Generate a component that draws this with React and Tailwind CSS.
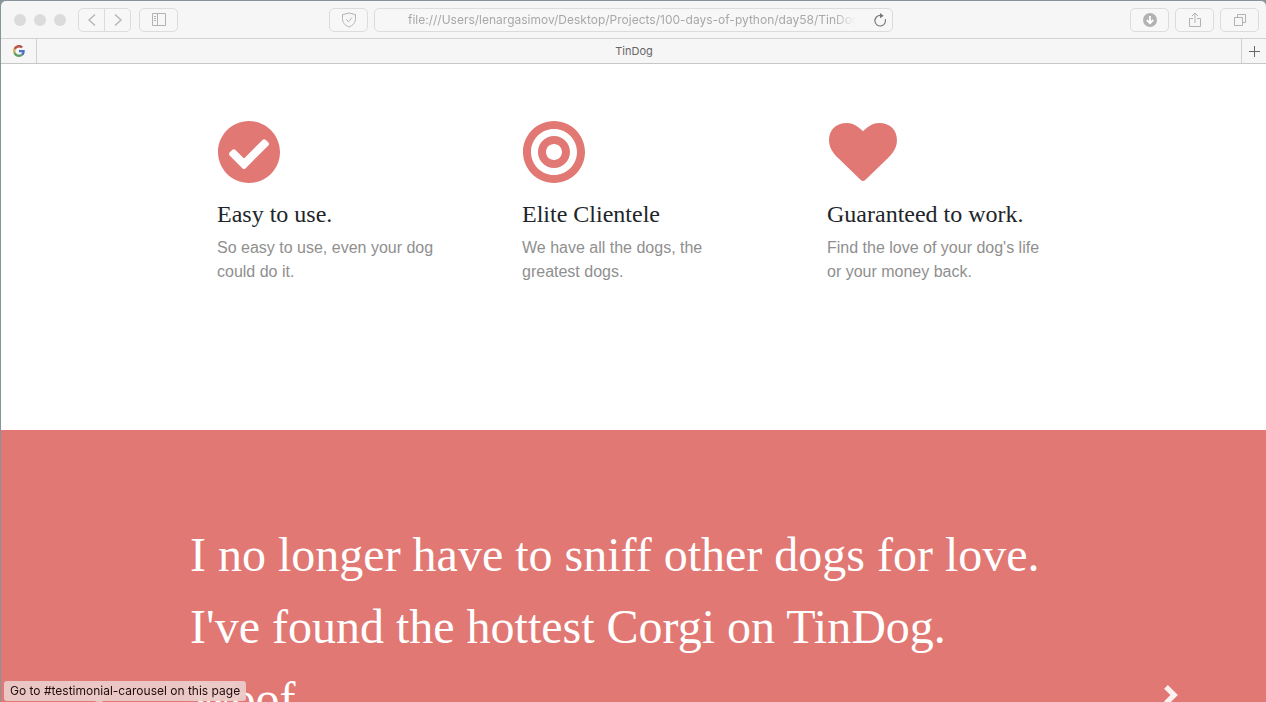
import { FaBullseye, FaCheckCircle } from "react-icons/fa";

const toolButton =
  "flex h-6 w-[39px] shrink-0 items-center justify-center rounded-[5px] border border-[#dcdcdc] bg-[#f7f7f7] text-[#b2b2b2]";

function HeartIcon() {
  return (
    <svg viewBox="0 0 576 512" className="h-16 w-[72px]" fill="currentColor" aria-hidden="true">
      <path d="M414.9 24C361.8 24 312 65.7 288 89.3 264 65.7 214.2 24 161.1 24 70.3 24 16 76.9 16 165.5c0 72.6 66.8 133.4 69.2 135.4l187 180.8c8.8 8.5 22.8 8.5 31.6 0l186.7-180.2c2.7-2.7 69.3-63.5 69.3-136C560 76.9 505.7 24 414.9 24z" />
    </svg>
  );
}

function GoogleIcon() {
  return (
    <svg viewBox="0 0 48 48" className="size-3" aria-hidden="true">
      <path fill="#b8544d" d="M24 9.500c3.540 0 6.710 1.220 9.210 3.600l6.850-6.850C35.900 2.380 30.470 0 24 0 14.620 0 6.510 5.380 2.560 13.220l7.980 6.190C12.430 13.720 17.740 9.500 24 9.500z" />
      <path fill="#4d74c4" d="M46.980 24.550c0-1.570-.15-3.090-.38-4.550H24v9.020h12.940c-.58 2.960-2.260 5.480-4.780 7.180l7.730 6c4.510-4.180 7.090-10.360 7.090-17.650z" />
      <path fill="#c9b45c" d="M10.530 28.590c-.48-1.450-.76-2.990-.76-4.590s.27-3.140.76-4.590l-7.980-6.190C.92 16.460 0 20.120 0 24c0 3.880.92 7.540 2.560 10.780l7.970-6.190z" />
      <path fill="#5b9c68" d="M24 48c6.480 0 11.930-2.130 15.890-5.810l-7.730-6c-2.150 1.450-4.920 2.300-8.160 2.300-6.260 0-11.570-4.220-13.470-9.910l-7.980 6.190C6.510 42.620 14.620 48 24 48z" />
    </svg>
  );
}

function Toolbar() {
  return (
    <header className="flex h-[38px] items-center justify-between gap-1.5 border-b border-[#d2d2d2] pr-[7px] pl-[13px]">
      <div className="flex w-[309px] shrink-0 items-center">
        <div className="flex gap-2">
          <span className="size-3 rounded-full bg-[#dbdbdb]" />
          <span className="size-3 rounded-full bg-[#dbdbdb]" />
          <span className="size-3 rounded-full bg-[#dbdbdb]" />
        </div>
        <div className="ml-3 flex h-6 w-[53px] divide-x divide-[#dcdcdc] rounded-[5px] border border-[#dcdcdc] bg-[#f7f7f7] text-[#b8b8b8]">
          <button aria-label="Back" className="flex flex-1 items-center justify-center">
            <svg viewBox="0 0 10 14" className="h-[14px] w-[10px]" fill="none" stroke="currentColor" strokeWidth="1.500">
              <path d="M8 1.500 2 7l6 5.500" />
            </svg>
          </button>
          <button aria-label="Forward" className="flex flex-1 items-center justify-center">
            <svg viewBox="0 0 10 14" className="h-[14px] w-[10px]" fill="none" stroke="currentColor" strokeWidth="1.500">
              <path d="M2 1.500 8 7l-6 5.500" />
            </svg>
          </button>
        </div>
        <button aria-label="Show sidebar" className={`${toolButton} ml-2`}>
          <svg viewBox="0 0 16 13" className="h-[13px] w-4" fill="none" stroke="currentColor">
            <path d="M1.500.5h13v12h-13zM6.500.5v12M3 3.500h2M3 5.500h2M3 7.500h2" />
          </svg>
        </button>
      </div>

      <div className="flex flex-1 items-center gap-1.5">
        <button aria-label="Privacy report" className={toolButton}>
          <svg viewBox="0 0 16 16" className="size-4" fill="none" stroke="currentColor" strokeLinejoin="round">
            <path d="M8 1 14.500 2.700V6.500C14.500 10.500 12 13.500 8 15 4 13.500 1.500 10.500 1.500 6.500V2.700z" />
            <path d="m5.200 7.500 2.200 2.200 3.600-4.200" />
          </svg>
        </button>
        <div className="flex h-6 min-w-0 flex-1 items-center rounded-[5px] border border-[#dcdcdc] bg-[#f7f7f7] pr-[5px] pl-[33px]">
          <input
            aria-label="Address"
            readOnly
            defaultValue="file:///Users/lenargasimov/Desktop/Projects/100-days-of-python/day58/TinDog/index.html"
            className="mr-auto h-5 w-[448px] min-w-0 bg-transparent mask-r-from-95% font-['Inter','Liberation_Sans',sans-serif] text-[12px] text-[#a8a8a8] outline-none"
          />
          <button aria-label="Reload" className="text-[#777]">
            <svg viewBox="0 0 14 14" className="size-[14px]" fill="none" stroke="currentColor" strokeWidth="1.200">
              <path d="M12.300 6.200A5.300 5.300 0 1 1 7.500 2.400" />
              <path d="M7 0 10.700 2.700 7 5.200z" fill="currentColor" stroke="none" />
            </svg>
          </button>
        </div>
      </div>

      <div className="flex w-[360px] shrink-0 items-center justify-end gap-1.5">
        <button aria-label="Downloads" className={toolButton}>
          <svg viewBox="0 0 14 14" className="size-[14px]">
            <circle cx="7" cy="7" r="7" fill="currentColor" />
            <path d="M7 3v7M3.800 7 7 10.200 10.200 7" fill="none" stroke="#fff" strokeWidth="1.800" />
          </svg>
        </button>
        <button aria-label="Share" className={toolButton}>
          <svg viewBox="0 0 14 16" className="h-4 w-[14px]" fill="none" stroke="currentColor">
            <path d="M5 6.500H1.500v8h11v-8H9M7 11V1.500M4 4l3-3 3 3" />
          </svg>
        </button>
        <button aria-label="Show all tabs" className={toolButton}>
          <svg viewBox="0 0 14 14" className="size-[14px]" fill="none" stroke="currentColor">
            <path d="M1.500 4.500h8v8h-8zM4.500 4.500v-3h8v8h-3" />
          </svg>
        </button>
      </div>
    </header>
  );
}

function TabBar() {
  return (
    <nav className="flex h-[25px] border-b border-[#c6c6c6] font-['Inter','Liberation_Sans',sans-serif] text-[11px] text-[#666]">
      <button aria-label="Google" className="flex w-9 items-center justify-center border-r border-[#d0d0d0]">
        <GoogleIcon />
      </button>
      <button className="flex-1 pr-2.5">TinDog</button>
      <button aria-label="New tab" className="flex w-[25px] items-center justify-center border-l border-[#d0d0d0]">
        <svg viewBox="0 0 11 11" className="size-[11px]" stroke="currentColor">
          <path d="M5.500 0v11M0 5.500h11" />
        </svg>
      </button>
    </nav>
  );
}

const features = [
  {
    icon: <FaCheckCircle size={64} />,
    title: "Easy to use.",
    text: "So easy to use, even your dog could do it.",
  },
  {
    icon: <FaBullseye size={64} />,
    title: "Elite Clientele",
    text: "We have all the dogs, the greatest dogs.",
  },
  {
    icon: <HeartIcon />,
    title: "Guaranteed to work.",
    text: "Find the love of your dog's life or your money back.",
  },
];

function Features() {
  return (
    <section className="grid grid-cols-3 bg-white px-[175px] pt-14 pb-[146px]">
      {features.map(({ icon, title, text }) => (
        <article key={title} className="pr-9 pl-[41px]">
          <div className="mb-4 h-16 text-[#e17873]">{icon}</div>
          <h3 className="mb-2 font-['Liberation_Serif',serif] text-2xl leading-7 whitespace-nowrap text-[#212529]">{title}</h3>
          <p className="font-['Liberation_Sans',Arial,sans-serif] text-base text-[#8f8f8f]">{text}</p>
        </article>
      ))}
    </section>
  );
}

function Testimonials() {
  return (
    <section id="testimonial-carousel" className="relative bg-[#e17873] pt-[89px] pr-[16%] pb-[225px] pl-[189px] text-white">
      <h2 className="font-['Liberation_Serif',serif] text-5xl leading-[72px]">
        I no longer have to sniff other dogs for love. I've found the hottest Corgi on TinDog. Woof.
      </h2>
      <a href="#testimonial-carousel" aria-label="Previous" className="absolute inset-y-0 left-0 flex w-[15%] items-center justify-center opacity-50">
        <svg viewBox="0 0 8 8" className="size-5" fill="currentColor">
          <path d="M5.250 0l-4 4 4 4 1.500-1.500L4.250 4l2.500-2.500L5.250 0z" />
        </svg>
      </a>
      <a href="#testimonial-carousel" aria-label="Next" className="absolute inset-y-0 right-0 flex w-[15%] items-center justify-center opacity-90">
        <svg viewBox="0 0 8 8" className="size-5" fill="currentColor">
          <path d="M2.750 0l-1.500 1.500L3.750 4l-2.500 2.500L2.750 8l4-4-4-4z" />
        </svg>
      </a>
    </section>
  );
}

export default function App() {
  return (
    <div className="h-screen overflow-hidden bg-[#87949a] pt-px pl-px">
      <div className="overflow-hidden rounded-t-[5px] bg-[#f6f6f6]">
        <Toolbar />
        <TabBar />
        <main>
          <Features />
          <Testimonials />
        </main>
      </div>
      <div className="fixed bottom-px left-1 flex h-5 items-center rounded-[3px] bg-[#ebcfcd]/90 px-1.5 font-['Inter','Liberation_Sans',sans-serif] text-[12px] whitespace-nowrap text-[#1f0c0c] backdrop-blur-sm">
        Go to #testimonial-carousel on this page
      </div>
    </div>
  );
}
